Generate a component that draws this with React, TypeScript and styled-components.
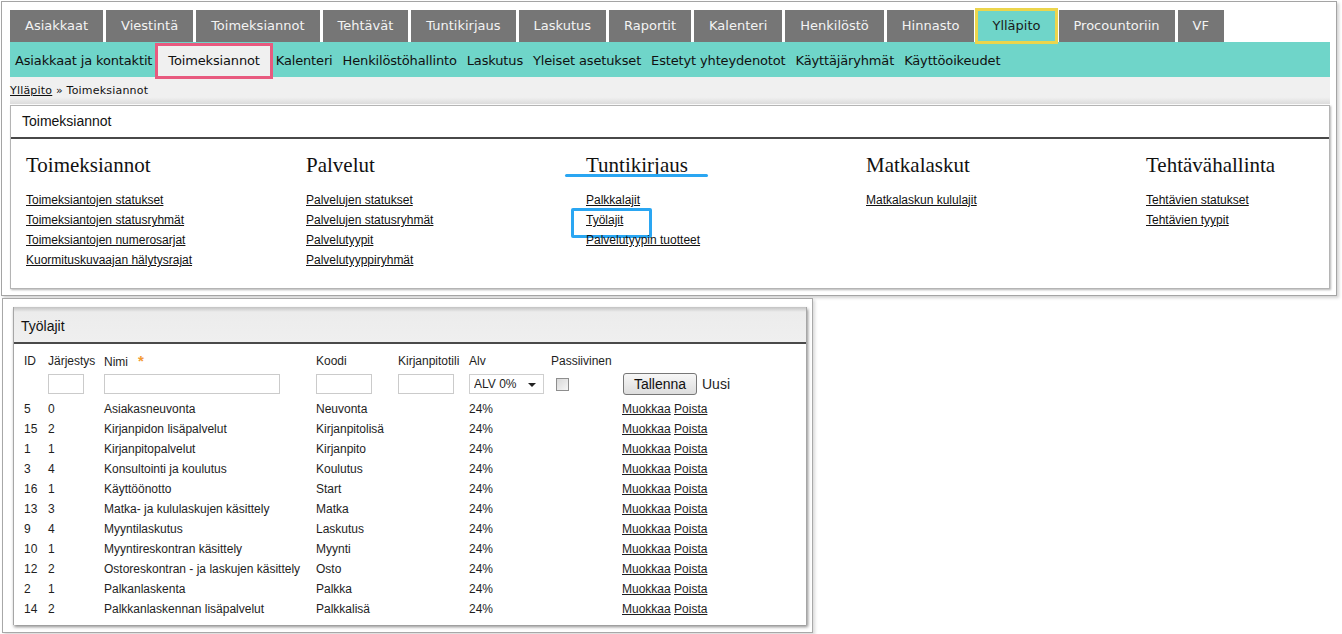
import React from 'react';
import styled, { createGlobalStyle, css } from 'styled-components';

const GlobalStyle = createGlobalStyle`
  html, body {
    margin: 0;
    padding: 0;
    background: #fff;
  }
  body {
    font-family: 'Liberation Sans', Arial, sans-serif;
    color: #1e1e1e;
  }
  * {
    box-sizing: border-box;
  }
`;

const Page = styled.div`
  width: 1342px;
  height: 634px;
  overflow: hidden;
  padding: 1px 0 0 1px;
`;

/* ---------- top screenshot ---------- */

const TopShot = styled.div`
  width: 1336px;
  height: 295px;
  border: 1px solid #a4a4a4;
  box-shadow: 2px 2px 3px rgba(0, 0, 0, 0.18);
  padding: 8px 6px 0 8px;
  background: #fff;
`;

const Tabs = styled.nav`
  display: flex;
  gap: 3px;
  height: 32px;
`;

const Tab = styled.span<{ $active?: boolean }>`
  position: relative;
  z-index: 1;
  padding: 0 15px;
  line-height: 32px;
  font-family: 'DejaVu Sans', Verdana, sans-serif;
  font-size: 13px;
  background: #767676;
  color: #f3f3f3;
  ${({ $active }) =>
    $active &&
    css`
      background: #6fd5c9;
      color: #1a1a1a;
      outline: 3px solid #ecd54c;
      outline-offset: -1px;
    `}
`;

const SubNav = styled.div`
  display: flex;
  align-items: flex-end;
  height: 35px;
  background: #6fd5c9;
`;

const SubItem = styled.span<{ $active?: boolean }>`
  height: 32px;
  line-height: 32px;
  padding: 0 5px;
  font-family: 'DejaVu Sans', Verdana, sans-serif;
  font-size: 13px;
  letter-spacing: -0.15px;
  color: #111;
  white-space: nowrap;
  ${({ $active }) =>
    $active &&
    css`
      position: relative;
      z-index: 1;
      padding: 0 11px;
      background: #f0f0f0;
      outline: 3px solid #e85a7f;
      outline-offset: -1px;
    `}
`;

const Crumbs = styled.div`
  height: 27px;
  line-height: 27px;
  background: linear-gradient(#f0f0f0 75%, #dcdcdc);
  font-family: 'DejaVu Sans', Verdana, sans-serif;
  font-size: 11px;
  letter-spacing: 0.2px;
  color: #111;
  a {
    color: #111;
    text-decoration: underline;
  }
`;

const Panel = styled.section`
  margin-top: 1px;
  border: 1px solid #b4b4b4;
  box-shadow: 1px 1px 2px rgba(0, 0, 0, 0.3);
  background: #fff;
`;

const PanelHead = styled.div`
  height: 33px;
  line-height: 31px;
  padding-left: 11px;
  border-bottom: 2px solid #484848;
  font-size: 14px;
  color: #111;
`;

const Columns = styled.div`
  display: grid;
  grid-template-columns: repeat(5, 280px);
  padding: 14px 0 18px 15px;
`;

const ColTitle = styled.h3<{ $marked?: boolean }>`
  position: relative;
  width: fit-content;
  margin: 0 0 13px;
  font-family: 'Liberation Serif', Georgia, serif;
  font-size: 21px;
  font-weight: normal;
  line-height: 24px;
  color: #111;
  ${({ $marked }) =>
    $marked &&
    css`
      &::after {
        content: '';
        position: absolute;
        left: -21px;
        right: -20px;
        bottom: 0;
        height: 3px;
        border-radius: 2px;
        background: #2aa6f2;
      }
    `}
`;

const LinkList = styled.ul`
  list-style: none;
  margin: 0;
  padding: 0;
`;

const LinkItem = styled.li<{ $marked?: boolean }>`
  position: relative;
  line-height: 20px;
  font-size: 12px;
  a {
    color: #111;
    text-decoration: underline;
  }
  ${({ $marked }) =>
    $marked &&
    css`
      &::after {
        content: '';
        position: absolute;
        left: -15px;
        top: -2px;
        width: 75px;
        height: 24px;
        border: 3px solid #2aa6f2;
        border-radius: 2px;
      }
    `}
`;

/* ---------- bottom screenshot ---------- */

const BottomShot = styled.div`
  width: 811px;
  height: 335px;
  margin: 2px 0 0 1px;
  border: 1px solid #a8a8a8;
  box-shadow: 2px 2px 3px rgba(0, 0, 0, 0.15);
  padding: 8px 0 0 10px;
  background: #fff;
`;

const ListPanel = styled.section`
  width: 794px;
  height: 318px;
  border-left: 1px solid #a6a6a6;
  border-right: 1px solid #a6a6a6;
  box-shadow: 1px 2px 3px rgba(0, 0, 0, 0.45);
  background: #fff;
`;

const ListHead = styled.div`
  height: 37px;
  padding: 3px 0 0 7px;
  line-height: 32px;
  background: linear-gradient(#c2c2c2, #ececec 5px, #efefef);
  border-bottom: 2px solid #4a4a4a;
  font-size: 14px;
  color: #111;
`;

const Table = styled.table`
  margin: 8px 0 0 10px;
  border-collapse: collapse;
  table-layout: fixed;
  width: 720px;
  font-size: 12px;
  color: #1e1e1e;
  td {
    padding: 0;
    white-space: nowrap;
    vertical-align: middle;
  }
`;

const LabelRow = styled.tr`
  height: 17px;
`;

const InputRow = styled.tr`
  height: 30px;
`;

const DataRow = styled.tr`
  height: 20px;
  a {
    color: #1e1e1e;
    text-decoration: underline;
  }
`;

const Required = styled.span`
  margin-left: 10px;
  color: #f39a34;
  font-size: 15px;
  font-weight: bold;
`;

const TextInput = styled.input<{ $w: number }>`
  display: block;
  width: ${({ $w }) => $w}px;
  height: 20px;
  padding: 0 3px;
  border: 1px solid #cbcbcb;
  background: #fff;
  font: inherit;
`;

const SelectBox = styled.div`
  position: relative;
  width: 75px;
  height: 20px;
  border: 1px solid #cfcfcf;
  select {
    appearance: none;
    width: 100%;
    height: 100%;
    border: none;
    background: transparent;
    padding: 0 0 0 4px;
    font: inherit;
    font-size: 12px;
    color: #1e1e1e;
  }
  &::after {
    content: '';
    position: absolute;
    right: 7px;
    top: 8px;
    border-left: 4px solid transparent;
    border-right: 4px solid transparent;
    border-top: 4px solid #222;
    pointer-events: none;
  }
`;

const Check = styled.input`
  appearance: none;
  display: block;
  margin: 0 0 0 5px;
  width: 13px;
  height: 13px;
  border: 1px solid #8e8e8e;
  background: linear-gradient(135deg, #d8d8d8, #f7f7f7);
`;

const SaveRow = styled.div`
  display: flex;
  align-items: center;
  margin-left: 1px;
  font-size: 14px;
`;

const Button = styled.button`
  width: 74px;
  height: 22px;
  padding: 0;
  border: 1px solid #777;
  border-radius: 3px;
  background: linear-gradient(#f7f7f7, #dddddd);
  font-family: 'Liberation Sans', Arial, sans-serif;
  font-size: 14px;
  color: #111;
`;

const NewLabel = styled.span`
  margin-left: 5px;
`;

const tabs = [
  'Asiakkaat',
  'Viestintä',
  'Toimeksiannot',
  'Tehtävät',
  'Tuntikirjaus',
  'Laskutus',
  'Raportit',
  'Kalenteri',
  'Henkilöstö',
  'Hinnasto',
  'Ylläpito',
  'Procountoriin',
  'VF',
];

const subItems = [
  'Asiakkaat ja kontaktit',
  'Toimeksiannot',
  'Kalenteri',
  'Henkilöstöhallinto',
  'Laskutus',
  'Yleiset asetukset',
  'Estetyt yhteydenotot',
  'Käyttäjäryhmät',
  'Käyttöoikeudet',
];

const sections = [
  {
    title: 'Toimeksiannot',
    links: [
      'Toimeksiantojen statukset',
      'Toimeksiantojen statusryhmät',
      'Toimeksiantojen numerosarjat',
      'Kuormituskuvaajan hälytysrajat',
    ],
  },
  {
    title: 'Palvelut',
    links: ['Palvelujen statukset', 'Palvelujen statusryhmät', 'Palvelutyypit', 'Palvelutyyppiryhmät'],
  },
  { title: 'Tuntikirjaus', links: ['Palkkalajit', 'Työlajit', 'Palvelutyypin tuotteet'] },
  { title: 'Matkalaskut', links: ['Matkalaskun kululajit'] },
  { title: 'Tehtävähallinta', links: ['Tehtävien statukset', 'Tehtävien tyypit'] },
];

const workTypes = [
  ['5', '0', 'Asiakasneuvonta', 'Neuvonta'],
  ['15', '2', 'Kirjanpidon lisäpalvelut', 'Kirjanpitolisä'],
  ['1', '1', 'Kirjanpitopalvelut', 'Kirjanpito'],
  ['3', '4', 'Konsultointi ja koulutus', 'Koulutus'],
  ['16', '1', 'Käyttöönotto', 'Start'],
  ['13', '3', 'Matka- ja kululaskujen käsittely', 'Matka'],
  ['9', '4', 'Myyntilaskutus', 'Laskutus'],
  ['10', '1', 'Myyntireskontran käsittely', 'Myynti'],
  ['12', '2', 'Ostoreskontran - ja laskujen käsittely', 'Osto'],
  ['2', '1', 'Palkanlaskenta', 'Palkka'],
  ['14', '2', 'Palkkanlaskennan lisäpalvelut', 'Palkkalisä'],
];

export default function App() {
  return (
    <Page>
      <GlobalStyle />
      <TopShot>
        <Tabs>
          {tabs.map((t) => (
            <Tab key={t} $active={t === 'Ylläpito'}>
              {t}
            </Tab>
          ))}
        </Tabs>
        <SubNav>
          {subItems.map((s, i) => (
            <SubItem key={s} $active={i === 1}>
              {s}
            </SubItem>
          ))}
        </SubNav>
        <Crumbs>
          <a>Ylläpito</a> » Toimeksiannot
        </Crumbs>
        <Panel>
          <PanelHead>Toimeksiannot</PanelHead>
          <Columns>
            {sections.map((sec) => (
              <div key={sec.title}>
                <ColTitle $marked={sec.title === 'Tuntikirjaus'}>{sec.title}</ColTitle>
                <LinkList>
                  {sec.links.map((l) => (
                    <LinkItem key={l} $marked={l === 'Työlajit'}>
                      <a>{l}</a>
                    </LinkItem>
                  ))}
                </LinkList>
              </div>
            ))}
          </Columns>
        </Panel>
      </TopShot>

      <BottomShot>
        <ListPanel>
          <ListHead>Työlajit</ListHead>
          <Table>
            <colgroup>
              <col style={{ width: 24 }} />
              <col style={{ width: 56 }} />
              <col style={{ width: 212 }} />
              <col style={{ width: 82 }} />
              <col style={{ width: 71 }} />
              <col style={{ width: 82 }} />
              <col style={{ width: 71 }} />
              <col style={{ width: 122 }} />
            </colgroup>
            <tbody>
              <LabelRow>
                <td>ID</td>
                <td>Järjestys</td>
                <td>
                  Nimi<Required>*</Required>
                </td>
                <td>Koodi</td>
                <td>Kirjanpitotili</td>
                <td>Alv</td>
                <td>Passiivinen</td>
                <td />
              </LabelRow>
              <InputRow>
                <td />
                <td>
                  <TextInput $w={36} />
                </td>
                <td>
                  <TextInput $w={176} />
                </td>
                <td>
                  <TextInput $w={56} />
                </td>
                <td>
                  <TextInput $w={56} />
                </td>
                <td>
                  <SelectBox>
                    <select defaultValue="0">
                      <option value="0">ALV 0%</option>
                      <option value="24">ALV 24%</option>
                    </select>
                  </SelectBox>
                </td>
                <td>
                  <Check type="checkbox" />
                </td>
                <td>
                  <SaveRow>
                    <Button>Tallenna</Button>
                    <NewLabel>Uusi</NewLabel>
                  </SaveRow>
                </td>
              </InputRow>
              {workTypes.map(([id, order, name, code]) => (
                <DataRow key={id}>
                  <td>{id}</td>
                  <td>{order}</td>
                  <td>{name}</td>
                  <td>{code}</td>
                  <td />
                  <td>24%</td>
                  <td />
                  <td>
                    <a>Muokkaa</a> <a>Poista</a>
                  </td>
                </DataRow>
              ))}
            </tbody>
          </Table>
        </ListPanel>
      </BottomShot>
    </Page>
  );
}
